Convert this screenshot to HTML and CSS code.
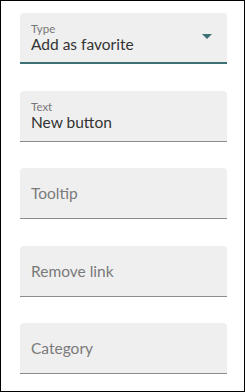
FILE: index.html
```html
<!DOCTYPE html>
<html lang="en">
<head>
  <meta charset="UTF-8" />
  <title>Button settings</title>
  <link rel="stylesheet" href="styles.css">
</head>
<body>
  <div class="panel">
    <div class="field field-focused">
      <div class="field-body">
        <span class="field-label">Type</span>
        <span class="field-value">Add as favorite</span>
      </div>
      <span class="field-arrow"></span>
    </div>
    <div class="field">
      <div class="field-body">
        <span class="field-label">Text</span>
        <span class="field-value">New button</span>
      </div>
    </div>
    <div class="field">
      <div class="field-body">
        <span class="field-placeholder">Tooltip</span>
      </div>
    </div>
    <div class="field">
      <div class="field-body">
        <span class="field-placeholder">Remove link</span>
      </div>
    </div>
    <div class="field">
      <div class="field-body">
        <span class="field-placeholder">Category</span>
      </div>
    </div>
  </div>
</body>
</html>
```

FILE: styles.css
```css
html, body {
  margin: 0;
  padding: 0;
  background: #fff;
}
body {
  font-family: 'Lato', 'Open Sans', sans-serif;
  width: 245px;
  height: 392px;
  box-sizing: border-box;
  border: 1px solid #000;
}
.panel {
  display: flex;
  flex-direction: column;
  gap: 26.5px;
  padding: 12px 17px 0 19px;
}
.field {
  display: flex;
  align-items: center;
  height: 51px;
  box-sizing: border-box;
  padding: 0 11px;
  background: #efefef;
  border-radius: 4px 4px 0 0;
  border-bottom: 1px solid #8c8c8c;
}
.field-focused {
  border-bottom: 2px solid #3d7074;
}
.field-body {
  flex: 1;
  display: flex;
  flex-direction: column;
}
.field-label {
  font-size: 11.5px;
  line-height: 12px;
  color: #777;
  margin-top: 1px;
}
.field-value {
  font-size: 15.5px;
  line-height: 18px;
  color: #333;
}
.field-placeholder {
  font-size: 15.5px;
  line-height: 18px;
  color: #7a7a7a;
}
.field-arrow {
  width: 0;
  height: 0;
  border-left: 5px solid transparent;
  border-right: 5px solid transparent;
  border-top: 5px solid #3d7074;
  margin-right: 4px;
  margin-top: -2px;
}
```
